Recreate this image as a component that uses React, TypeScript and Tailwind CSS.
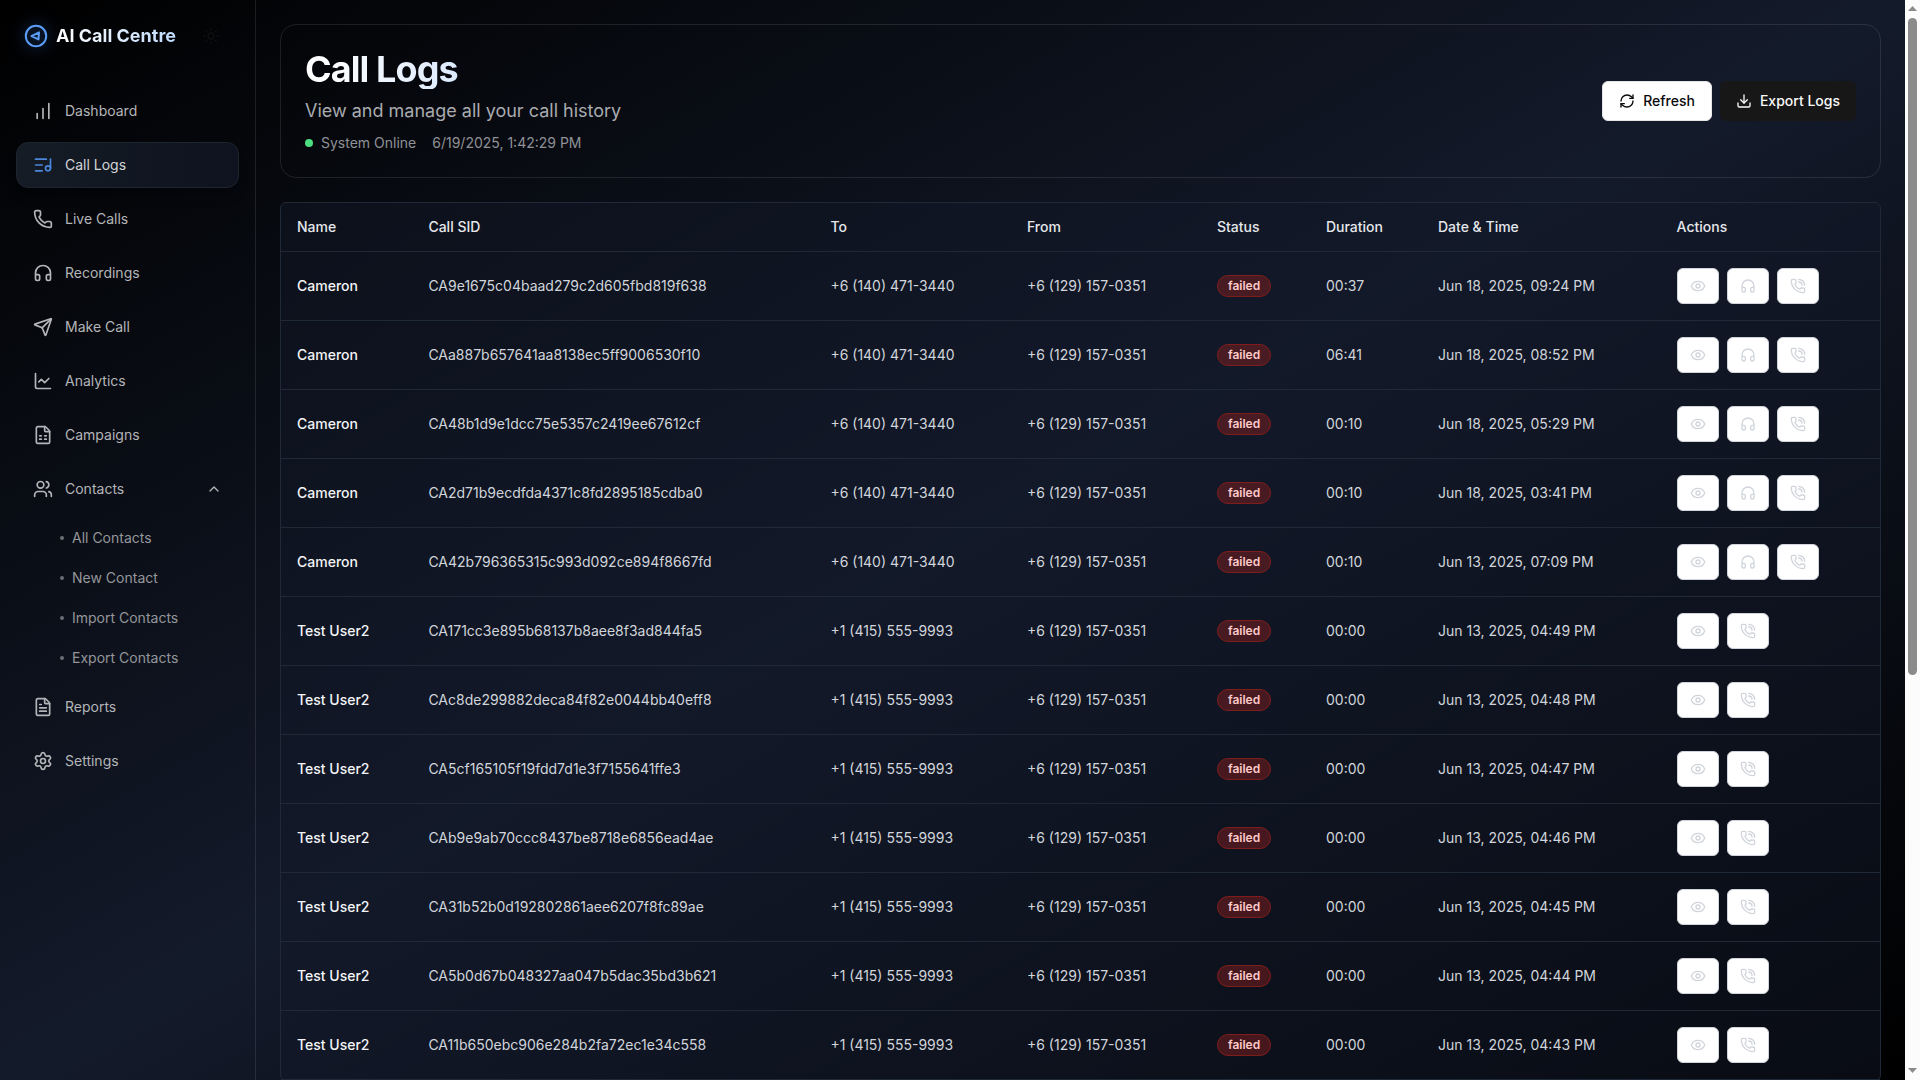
import React from "react";
import {
  ChartNoAxesColumnIncreasing,
  ChevronUp,
  Download,
  Eye,
  FileSpreadsheet,
  FileText,
  Headphones,
  ListMusic,
  ChartLine,
  Phone,
  PhoneCall,
  RefreshCw,
  Send,
  Settings,
  Sun,
  Users,
} from "lucide-react";

type IconType = React.ComponentType<{ className?: string; strokeWidth?: number }>;

const mainNav: { label: string; icon: IconType; active?: boolean; open?: boolean }[] = [
  { label: "Dashboard", icon: ChartNoAxesColumnIncreasing },
  { label: "Call Logs", icon: ListMusic, active: true },
  { label: "Live Calls", icon: Phone },
  { label: "Recordings", icon: Headphones },
  { label: "Make Call", icon: Send },
  { label: "Analytics", icon: ChartLine },
  { label: "Campaigns", icon: FileSpreadsheet },
  { label: "Contacts", icon: Users, open: true },
];

const contactLinks = ["All Contacts", "New Contact", "Import Contacts", "Export Contacts"];

const footerNav: { label: string; icon: IconType; active?: boolean; open?: boolean }[] = [
  { label: "Reports", icon: FileText },
  { label: "Settings", icon: Settings },
];

const rows = [
  ["Cameron", "CA9e1675c04baad279c2d605fbd819f638", "00:37", "Jun 18, 2025, 09:24 PM"],
  ["Cameron", "CAa887b657641aa8138ec5ff9006530f10", "06:41", "Jun 18, 2025, 08:52 PM"],
  ["Cameron", "CA48b1d9e1dcc75e5357c2419ee67612cf", "00:10", "Jun 18, 2025, 05:29 PM"],
  ["Cameron", "CA2d71b9ecdfda4371c8fd2895185cdba0", "00:10", "Jun 18, 2025, 03:41 PM"],
  ["Cameron", "CA42b796365315c993d092ce894f8667fd", "00:10", "Jun 13, 2025, 07:09 PM"],
  ["Test User2", "CA171cc3e895b68137b8aee8f3ad844fa5", "00:00", "Jun 13, 2025, 04:49 PM"],
  ["Test User2", "CAc8de299882deca84f82e0044bb40eff8", "00:00", "Jun 13, 2025, 04:48 PM"],
  ["Test User2", "CA5cf165105f19fdd7d1e3f7155641ffe3", "00:00", "Jun 13, 2025, 04:47 PM"],
  ["Test User2", "CAb9e9ab70ccc8437be8718e6856ead4ae", "00:00", "Jun 13, 2025, 04:46 PM"],
  ["Test User2", "CA31b52b0d192802861aee6207f8fc89ae", "00:00", "Jun 13, 2025, 04:45 PM"],
  ["Test User2", "CA5b0d67b048327aa047b5dac35bd3b621", "00:00", "Jun 13, 2025, 04:44 PM"],
  ["Test User2", "CA11b650ebc906e284b2fa72ec1e34c558", "00:00", "Jun 13, 2025, 04:43 PM"],
];

const columns = "grid grid-cols-[131.4px_402px_196.6px_190px_109px_112px_238.6px_1fr] items-center";

function Logo() {
  return (
    <svg
      viewBox="0 0 24 24"
      className="size-6 text-[#5b9cf5] drop-shadow-[0_0_8px_rgba(59,130,246,0.6)]"
      fill="none"
      stroke="currentColor"
      strokeLinecap="round"
      strokeLinejoin="round"
    >
      <circle cx="12" cy="12" r="10.2" strokeWidth="2" />
      <path d="M7.4 12.1 15 8.4 14.5 15.4Z" strokeWidth="2" />
    </svg>
  );
}

function NavItem({ label, icon: Icon, active, open }: (typeof mainNav)[number]) {
  return (
    <a
      className={
        active
          ? "flex h-[46px] items-center gap-3 rounded-xl border border-[#1e252f] bg-linear-to-r from-[#151c25] to-[#0e131f] px-4 text-sm text-[#d3d5d9] shadow-lg"
          : "flex h-[46px] items-center gap-3 rounded-xl border border-transparent px-4 text-sm text-[#b4b5b8]"
      }
    >
      <Icon className={active ? "size-5 text-[#4b87da]" : "size-5"} />
      <span className="flex-1">{label}</span>
      {open && <ChevronUp className="size-4" />}
    </a>
  );
}

function Sidebar() {
  return (
    <aside className="flex w-64 shrink-0 flex-col border-r border-white/10">
      <div className="flex h-[72px] items-center pl-6">
        <Logo />
        <span className="ml-2 bg-linear-to-r from-white to-[#bfdbfe] bg-clip-text text-lg font-bold text-transparent">
          AI Call Centre
        </span>
        <Sun className="ml-[26px] size-[18px] text-[#0e0f11]" />
      </div>
      <nav className="mt-4 flex flex-col gap-2 px-4">
        {mainNav.map((item) => (
          <NavItem key={item.label} {...item} />
        ))}
        <div className="-mt-0.5 flex flex-col pl-11">
          {contactLinks.map((label) => (
            <a key={label} className="flex h-10 items-center gap-2 text-sm text-[#94969a]">
              <span className="size-1 rounded-full bg-[#6b6e74]" />
              {label}
            </a>
          ))}
        </div>
        <div className="-mt-0.5 flex flex-col gap-2">
          {footerNav.map((item) => (
            <NavItem key={item.label} {...item} />
          ))}
        </div>
      </nav>
    </aside>
  );
}

function Header() {
  return (
    <header className="flex h-[154px] shrink-0 items-center justify-between rounded-2xl border border-white/10 px-6">
      <div>
        <h1 className="w-fit bg-linear-to-r from-white from-10% to-[#dbeafe] bg-clip-text text-4xl font-bold tracking-tight text-transparent">
          Call Logs
        </h1>
        <p className="mt-2 text-lg text-[#a9abaf]">View and manage all your call history</p>
        <div className="mt-2 flex items-center gap-4 text-sm text-[#8f9196]">
          <span className="flex items-center gap-2">
            <span className="size-2 rounded-full bg-[#4ade80]" />
            System Online
          </span>
          <span>6/19/2025, 1:42:29 PM</span>
        </div>
      </div>
      <div className="flex gap-2 text-sm font-medium">
        <button className="flex h-10 items-center gap-2 rounded-md border border-neutral-200 bg-white px-4 text-neutral-950">
          <RefreshCw className="size-4" />
          Refresh
        </button>
        <button className="flex h-10 items-center gap-2 rounded-md bg-neutral-900 px-4 text-neutral-50">
          <Download className="size-4" />
          Export Logs
        </button>
      </div>
    </header>
  );
}

function ActionButton({ icon: Icon }: { icon: IconType }) {
  return (
    <button className="flex h-9 w-[42px] items-center justify-center rounded-md border border-[#d1d5db] bg-white text-[#d1d5db]">
      <Icon className="size-4" />
    </button>
  );
}

function CallTable() {
  return (
    <section className="rounded-md border border-[#1f2937] bg-[#111827]/50 text-sm">
      <div className={`${columns} h-[49px] border-b border-[#1f2937] font-medium text-[#e5e7eb]`}>
        {["Name", "Call SID", "To", "From", "Status", "Duration", "Date & Time", "Actions"].map((h) => (
          <div key={h} className="px-4">{h}</div>
        ))}
      </div>
      {rows.map(([name, sid, duration, date]) => {
        const known = name === "Cameron";
        return (
          <div key={sid} className={`${columns} h-[69px] border-b border-[#1f2937] text-[#d1d5db]`}>
            <div className="px-4 font-medium text-[#f3f4f6]">{name}</div>
            <div className="px-4">{sid}</div>
            <div className="px-4">{known ? "+6 (140) 471-3440" : "+1 (415) 555-9993"}</div>
            <div className="px-4">+6 (129) 157-0351</div>
            <div className="px-4">
              <span className="inline-flex h-[22px] items-center rounded-full border border-[#7f1d1d] bg-[#7f1d1d]/50 px-2.5 text-xs font-semibold text-[#fecaca]">
                failed
              </span>
            </div>
            <div className="px-4">{duration}</div>
            <div className="px-4">{date}</div>
            <div className="flex gap-2 px-4">
              <ActionButton icon={Eye} />
              {known && <ActionButton icon={Headphones} />}
              <ActionButton icon={PhoneCall} />
            </div>
          </div>
        );
      })}
    </section>
  );
}

function Scrollbar() {
  return (
    <div className="flex w-[15px] shrink-0 flex-col items-center bg-[#fcfcfc]">
      <svg viewBox="0 0 9 5" className="mt-[6px] h-[5px] w-[9px] fill-[#8b8b8b]">
        <path d="M4.5 0 9 5H0Z" />
      </svg>
      <div className="mt-[7px] h-[657px] w-[9px] rounded-full bg-[#8b8b8b]" />
      <svg viewBox="0 0 9 5" className="mt-auto mb-[7px] h-[5px] w-[9px] fill-[#8b8b8b]">
        <path d="M4.5 5 9 0H0Z" />
      </svg>
    </div>
  );
}

export default function App() {
  return (
    <div className="flex h-[1080px] w-[1920px] overflow-hidden bg-black font-['Inter',sans-serif]">
      <div className="flex min-w-0 flex-1 bg-[linear-gradient(to_bottom_right,#000000,#131a2a,#000000)]">
        <Sidebar />
        <main className="flex min-w-0 flex-1 flex-col gap-6 p-6">
          <Header />
          <CallTable />
        </main>
      </div>
      <Scrollbar />
    </div>
  );
}
